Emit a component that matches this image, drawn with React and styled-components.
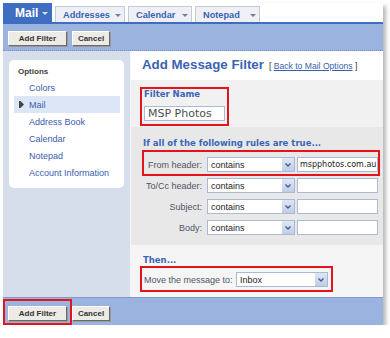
import React from "react";
import styled, { createGlobalStyle } from "styled-components";

const GlobalStyle = createGlobalStyle`
  body {
    margin: 0;
    background: #fff;
    font-family: "Liberation Sans", Arial, sans-serif;
  }
`;

const Window = styled.div`
  width: 380px;
  margin: 3px 0 0 3px;
  background: #fff;
  box-shadow: 3px 3px 4px rgba(0, 0, 0, 0.28);
`;

const TabStrip = styled.div`
  display: flex;
  align-items: flex-end;
  gap: 3px;
  height: 19px;
  background: #fff;
`;

const Tab = styled.div`
  box-sizing: border-box;
  display: flex;
  align-items: center;
  justify-content: space-between;
  width: ${(p) => p.$w}px;
  height: ${(p) => (p.$active ? 19 : 16)}px;
  padding: 0 3px 0 ${(p) => (p.$active ? 11 : 7)}px;
  background: ${(p) => (p.$active ? "#3e6dc2" : "#eef0f5")};
  border: 1px solid ${(p) => (p.$active ? "#3e6dc2" : "#c4cad7")};
  border-bottom: none;
  color: ${(p) => (p.$active ? "#fff" : "#3a63b3")};
  font-size: ${(p) => (p.$active ? 12 : 9.2)}px;
  font-weight: bold;
`;

const TabArrow = styled.span`
  width: 0;
  height: 0;
  border-left: 3px solid transparent;
  border-right: 3px solid transparent;
  border-top: 3px solid ${(p) => (p.$active ? "#dbe4f5" : "#6f7fa3")};
  margin-top: 1px;
`;

const BlueRule = styled.div`
  height: 2px;
  background: #3e6dc2;
`;

const Toolbar = styled.div`
  box-sizing: border-box;
  display: flex;
  align-items: flex-start;
  gap: ${(p) => (p.$bottom ? 0 : 5)}px;
  height: ${(p) => (p.$bottom ? 28 : 27)}px;
  padding: ${(p) => (p.$bottom ? "1px 0 0 0" : "7px 0 0 5px")};
  background: #9ab3df;
  border-top: ${(p) => (p.$bottom ? "1px solid #7f9ad0" : "none")};
  border-bottom: ${(p) => (p.$bottom ? "none" : "1px dotted #6f8fcb")};
`;

const Button = styled.button`
  box-sizing: border-box;
  width: ${(p) => p.$w}px;
  height: 15px;
  margin: ${(p) => p.$m || 0};
  padding: 0;
  background: #ecebe6;
  border: 1px solid;
  border-color: #fff #6a6a6a #6a6a6a #fff;
  box-shadow: 1px 1px 0 #9a9a9a;
  font-family: "Liberation Sans", Arial, sans-serif;
  font-size: 8px;
  font-weight: bold;
  color: #333;
`;

const Highlight = styled.div`
  box-sizing: border-box;
  display: flex;
  flex-direction: ${(p) => (p.$col ? "column" : "row")};
  align-items: ${(p) => (p.$col ? "flex-start" : "center")};
  width: ${(p) => (p.$w ? `${p.$w}px` : "auto")};
  padding: ${(p) => p.$pad};
  margin: ${(p) => p.$m || 0};
  border: 2px solid #e3141b;
`;

const Body = styled.div`
  display: flex;
  height: 246px;
`;

const Sidebar = styled.div`
  box-sizing: border-box;
  width: 127px;
  padding: 9px 3px 0 6px;
  background: #d6deec;
`;

const OptionsBox = styled.div`
  box-sizing: border-box;
  width: 115px;
  padding: 6px 4px 7px 5px;
  background: #fff;
  border-radius: 5px;
`;

const OptionsTitle = styled.div`
  padding-left: 4px;
  margin-bottom: 1px;
  font-size: 8px;
  line-height: 12px;
  font-weight: bold;
  color: #3d3d3d;
`;

const NavItem = styled.div`
  display: flex;
  align-items: center;
  height: 17px;
  padding-left: 5px;
  background: ${(p) => (p.$active ? "#dde6f6" : "transparent")};
  font-size: 9px;
  color: #3b5cae;
`;

const IconSlot = styled.span`
  display: flex;
  align-items: center;
  width: 10px;
`;

const Main = styled.div`
  flex: 1;
  display: flex;
  flex-direction: column;
  border-left: 1px solid #f4f6fa;
  background: #fff;
`;

const TitleRow = styled.div`
  box-sizing: border-box;
  display: flex;
  align-items: baseline;
  height: 29px;
  padding: 6px 0 0 11px;
`;

const Title = styled.h1`
  margin: 0;
  font-size: 13.3px;
  line-height: 16px;
  font-weight: bold;
  color: #3b63b2;
`;

const BackLink = styled.span`
  margin-left: 5px;
  font-size: 8.6px;
  color: #333;

  a {
    color: #3a5fae;
    text-decoration: underline;
  }
`;

const Panel = styled.div`
  box-sizing: border-box;
  height: ${(p) => p.$h}px;
  padding: ${(p) => p.$pad};
  background: ${(p) => p.$bg};
`;

const Heading = styled.div`
  margin-left: ${(p) => p.$ml || 0}px;
  font-family: "DejaVu Sans", Verdana, sans-serif;
  font-size: 8.5px;
  line-height: 11px;
  font-weight: bold;
  color: #3b66b5;
`;

const NameInput = styled.div`
  box-sizing: border-box;
  width: 81px;
  height: 15px;
  margin-top: 6px;
  padding-left: 3px;
  border: 1px solid #a9b9d6;
  background: #fff;
  font-family: "DejaVu Sans", Verdana, sans-serif;
  font-size: 11px;
  line-height: 13px;
  color: #4d4d4d;
`;

const RuleRow = styled.div`
  display: flex;
  align-items: center;
  height: 15px;
  margin: ${(p) => p.$m || 0};
`;

const Label = styled.span`
  width: ${(p) => p.$w}px;
  margin-right: ${(p) => p.$gap}px;
  text-align: ${(p) => p.$align || "right"};
  font-size: 9px;
  color: #4f5564;
  white-space: nowrap;
`;

const Select = styled.div`
  box-sizing: border-box;
  display: flex;
  align-items: center;
  justify-content: space-between;
  width: ${(p) => p.$w}px;
  height: 15px;
  padding-left: 3px;
  border: 1px solid #a9b9d6;
  background: #fff;
  font-size: 9px;
  color: #1e1e1e;
`;

const DropButton = styled.span`
  display: flex;
  align-items: center;
  justify-content: center;
  width: 12px;
  height: 13px;
  background: linear-gradient(#dfe7f4, #bfcde6);
`;

const TextInput = styled.div`
  box-sizing: border-box;
  width: 81px;
  height: 15px;
  margin-left: 2px;
  padding-left: 2px;
  border: 1px solid #a9b9d6;
  background: #fff;
  font-family: "DejaVu Sans", Verdana, sans-serif;
  font-size: 8px;
  line-height: 13px;
  color: #222;
  white-space: nowrap;
  overflow: hidden;
`;

const Chevron = () => (
  <svg width="6" height="4" viewBox="0 0 6 4">
    <path d="M0.5 0.5 L3 3 L5.5 0.5" fill="none" stroke="#3d5a92" strokeWidth="1.3" />
  </svg>
);

const Pointer = () => (
  <svg width="5" height="7" viewBox="0 0 5 7">
    <path d="M0 0 H1.5 L5 3.5 L1.5 7 H0 Z" fill="#444" />
  </svg>
);

const tabs = [
  { name: "Mail", w: 49, active: true },
  { name: "Addresses", w: 70 },
  { name: "Calendar", w: 64 },
  { name: "Notepad", w: 65 },
];

const navItems = ["Colors", "Mail", "Address Book", "Calendar", "Notepad", "Account Information"];

const rules = [
  { label: "To/Cc header:", m: "2px 0 0 2px" },
  { label: "Subject:", m: "6px 0 0 2px" },
  { label: "Body:", m: "6px 0 0 2px" },
];

const Dropdown = ({ value, w }) => (
  <Select $w={w}>
    {value}
    <DropButton>
      <Chevron />
    </DropButton>
  </Select>
);

export default function App() {
  return (
    <>
      <GlobalStyle />
      <Window>
        <TabStrip>
          {tabs.map((t) => (
            <Tab key={t.name} $w={t.w} $active={t.active}>
              {t.name}
              <TabArrow $active={t.active} />
            </Tab>
          ))}
        </TabStrip>
        <BlueRule />
        <Toolbar>
          <Button $w={59}>Add Filter</Button>
          <Button $w={38}>Cancel</Button>
        </Toolbar>
        <Body>
          <Sidebar>
            <OptionsBox>
              <OptionsTitle>Options</OptionsTitle>
              {navItems.map((item) => (
                <NavItem key={item} $active={item === "Mail"}>
                  <IconSlot>{item === "Mail" && <Pointer />}</IconSlot>
                  {item}
                </NavItem>
              ))}
            </OptionsBox>
          </Sidebar>
          <Main>
            <TitleRow>
              <Title>Add Message Filter</Title>
              <BackLink>
                [ <a>Back to Mail Options</a> ]
              </BackLink>
            </TitleRow>
            <Panel $h={47} $pad="7px 0 0 9px" $bg="#f1f1f1">
              <Highlight $col $w={89} $pad="0 2px 3px 2px">
                <Heading>Filter Name</Heading>
                <NameInput>MSP Photos</NameInput>
              </Highlight>
            </Panel>
            <Panel $h={118} $pad="11px 0 0 11px" $bg="#e8e8e8">
              <Heading $ml={1}>If all of the following rules are true...</Heading>
              <Highlight $w={238} $pad="5px 0 2px 0" $m="1px 0 0 0">
                <RuleRow>
                  <Label $w={58} $gap={5}>From header:</Label>
                  <Dropdown value="contains" w={88} />
                  <TextInput>mspphotos.com.au</TextInput>
                </RuleRow>
              </Highlight>
              {rules.map((r) => (
                <RuleRow key={r.label} $m={r.m}>
                  <Label $w={58} $gap={5}>{r.label}</Label>
                  <Dropdown value="contains" w={88} />
                  <TextInput />
                </RuleRow>
              ))}
            </Panel>
            <Panel $h={52} $pad="10px 0 0 9px" $bg="#f5f5f5">
              <Heading $ml={3}>Then...</Heading>
              <Highlight $w={193} $pad="4px 3px 3px 2px">
                <Label $w={88} $gap={4} $align="left">Move the message to:</Label>
                <Dropdown value="Inbox" w={92} />
              </Highlight>
            </Panel>
          </Main>
        </Body>
        <Toolbar $bottom>
          <Highlight $pad="5px 3px 2px 3px">
            <Button $w={59}>Add Filter</Button>
          </Highlight>
          <Button $w={38} $m="7px 0 0 0">Cancel</Button>
        </Toolbar>
      </Window>
    </>
  );
}
